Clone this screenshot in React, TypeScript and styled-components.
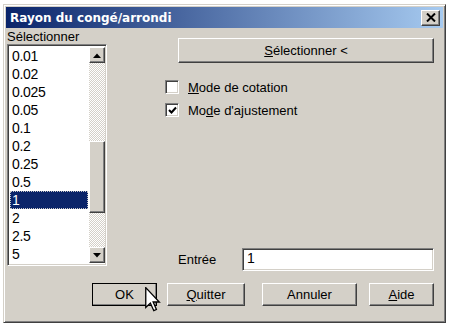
import React from 'react';
import styled, { createGlobalStyle, css } from 'styled-components';

const FACE = '#d4d0c8';
const SHADOW = '#808080';
const DARK = '#404040';

const GlobalStyle = createGlobalStyle`
  html, body {
    margin: 0;
    padding: 0;
    background: #fff;
  }
  body {
    font-family: 'Liberation Sans', Arial, sans-serif;
    font-size: 13px;
    color: #000;
  }
`;

const raised = css`
  border: 1px solid;
  border-color: #fff ${DARK} ${DARK} #fff;
  box-shadow: inset -1px -1px 0 ${SHADOW}, inset 1px 1px 0 ${FACE};
`;

const sunken = css`
  border: 1px solid;
  border-color: ${SHADOW} #fff #fff ${SHADOW};
  box-shadow: inset 1px 1px 0 ${DARK}, inset -1px -1px 0 ${FACE};
`;

const Screen = styled.div`
  padding: 4px 3px 0;
`;

const Window = styled.div`
  position: relative;
  box-sizing: border-box;
  width: 443px;
  height: 319px;
  padding: 2px;
  background: ${FACE};
  border: 1px solid;
  border-color: ${FACE} ${DARK} ${DARK} ${FACE};
  box-shadow: inset 1px 1px 0 #fff, inset -1px -1px 0 ${SHADOW};
`;

const TitleBar = styled.div`
  display: flex;
  align-items: center;
  justify-content: space-between;
  height: 21px;
  padding: 0 3px 0 4px;
  background: linear-gradient(to right, #0a246a, #a6caf0);
`;

const Title = styled.span`
  font-family: 'DejaVu Sans', Verdana, sans-serif;
  font-weight: bold;
  font-size: 12px;
  color: #fff;
`;

const CloseButton = styled.div`
  box-sizing: border-box;
  display: flex;
  align-items: center;
  justify-content: center;
  width: 19px;
  height: 16px;
  background: ${FACE};
  ${raised};
`;

const Body = styled.div`
  display: grid;
  grid-template-columns: 100px 1fr;
  grid-template-rows: 241px auto;
  column-gap: 58px;
  padding: 2px 9px 0 1px;
`;

const LeftColumn = styled.div`
  display: flex;
  flex-direction: column;
`;

const Label = styled.div`
  height: 14px;
  line-height: 14px;
`;

const ListBox = styled.div`
  box-sizing: border-box;
  display: flex;
  width: 100px;
  height: 222px;
  padding: 2px 1px 2px 2px;
  background: #fff;
  ${sunken};
`;

const Items = styled.div`
  flex: 1;
  padding-right: 1px;
`;

const Item = styled.div<{ $selected?: boolean }>`
  box-sizing: border-box;
  height: 18px;
  line-height: 18px;
  padding-left: 2px;
  font-size: 14px;
  letter-spacing: -0.3px;
  color: ${(p) => (p.$selected ? '#fff' : '#000')};
  background: ${(p) => (p.$selected ? '#0a246a' : 'transparent')};
  outline: ${(p) => (p.$selected ? '1px dotted #c8c8c8' : 'none')};
  outline-offset: -1px;
`;

const ScrollBar = styled.div`
  display: flex;
  flex-direction: column;
  width: 16px;
`;

const ArrowButton = styled.div`
  box-sizing: border-box;
  display: flex;
  align-items: center;
  justify-content: center;
  height: 16px;
  background: ${FACE};
  ${raised};
`;

const Track = styled.div<{ $size?: number }>`
  flex: ${(p) => (p.$size ? `0 0 ${p.$size}px` : '1')};
  background-color: #fff;
  background-image: repeating-conic-gradient(${FACE} 0 25%, #fff 0 50%);
  background-size: 2px 2px;
`;

const Thumb = styled.div`
  box-sizing: border-box;
  flex: 0 0 72px;
  background: ${FACE};
  ${raised};
`;

const RightColumn = styled.div`
  display: flex;
  flex-direction: column;
`;

const Button = styled.div<{ $width?: number; $default?: boolean; $gap?: number }>`
  box-sizing: border-box;
  display: flex;
  align-items: center;
  justify-content: center;
  width: ${(p) => (p.$width ? `${p.$width}px` : 'auto')};
  height: 25px;
  margin-left: ${(p) => p.$gap ?? 0}px;
  background: ${FACE};
  ${raised};
  ${(p) =>
    p.$default &&
    css`
      outline: 1px solid #000;
      outline-offset: -1px;
      border-color: #fff #000 #000 #fff;
    `}
`;

const WideButton = styled(Button)`
  margin: 8px 0 0 13px;
`;

const CheckRow = styled.div<{ $gap: number }>`
  display: flex;
  align-items: center;
  gap: 9px;
  height: 14px;
  margin-top: ${(p) => p.$gap}px;
`;

const CheckBox = styled.div`
  box-sizing: border-box;
  display: flex;
  align-items: center;
  justify-content: center;
  width: 14px;
  height: 14px;
  background: #fff;
  ${sunken};
`;

const Spacer = styled.div`
  flex: 1;
`;

const EntryRow = styled.div`
  display: flex;
  align-items: center;
  height: 23px;
  margin-left: 13px;
`;

const EntryLabel = styled.span`
  width: 64px;
`;

const Input = styled.div`
  box-sizing: border-box;
  flex: 1;
  height: 23px;
  padding-left: 4px;
  line-height: 19px;
  font-size: 14px;
  background: #fff;
  ${sunken};
`;

const ButtonRow = styled.div`
  grid-column: 1 / -1;
  display: flex;
  justify-content: flex-end;
  margin-top: 12px;

  ${Button} {
    height: 23px;
  }
`;

const Cursor = styled.svg`
  position: absolute;
  left: 141px;
  top: 282px;
`;

const values = ['0.01', '0.02', '0.025', '0.05', '0.1', '0.2', '0.25', '0.5', '1', '2', '2.5', '5'];

const Tri: React.FC<{ down?: boolean }> = ({ down }) => (
  <svg width="8" height="5" viewBox="0 0 8 5">
    <polygon points={down ? '0,0 8,0 4,4.5' : '4,0.5 8,5 0,5'} fill="#000" />
  </svg>
);

const App: React.FC = () => (
  <Screen>
    <GlobalStyle />
    <Window>
      <TitleBar>
        <Title>Rayon du congé/arrondi</Title>
        <CloseButton>
          <svg width="10" height="9" viewBox="0 0 10 9">
            <path d="M1 0.5 L9 8.5 M9 0.5 L1 8.5" stroke="#000" strokeWidth="2" />
          </svg>
        </CloseButton>
      </TitleBar>
      <Body>
        <LeftColumn>
          <Label>Sélectionner</Label>
          <ListBox>
            <Items>
              {values.map((v) => (
                <Item key={v} $selected={v === '1'}>
                  {v}
                </Item>
              ))}
            </Items>
            <ScrollBar>
              <ArrowButton>
                <Tri />
              </ArrowButton>
              <Track $size={78} />
              <Thumb />
              <Track />
              <ArrowButton>
                <Tri down />
              </ArrowButton>
            </ScrollBar>
          </ListBox>
        </LeftColumn>
        <RightColumn>
          <WideButton>
            <span>
              <u>S</u>électionner &lt;
            </span>
          </WideButton>
          <CheckRow $gap={17}>
            <CheckBox />
            <span>
              <u>M</u>ode de cotation
            </span>
          </CheckRow>
          <CheckRow $gap={9}>
            <CheckBox>
              <svg width="9" height="9" viewBox="0 0 9 9">
                <path d="M1 4 L3.5 6.5 L8 1.5" stroke="#000" strokeWidth="2" fill="none" />
              </svg>
            </CheckBox>
            <span>
              Mo<u>d</u>e d'ajustement
            </span>
          </CheckRow>
          <Spacer />
          <EntryRow>
            <EntryLabel>Entrée</EntryLabel>
            <Input>1</Input>
          </EntryRow>
        </RightColumn>
        <ButtonRow>
          <Button $width={65} $default>
            OK
          </Button>
          <Button $width={78} $gap={10}>
            <span>
              <u>Q</u>uitter
            </span>
          </Button>
          <Button $width={95} $gap={17}>
            Annuler
          </Button>
          <Button $width={65} $gap={12}>
            <span>
              <u>A</u>ide
            </span>
          </Button>
        </ButtonRow>
      </Body>
      <Cursor width="16" height="25" viewBox="0 0 12 19">
        <path
          d="M0.5 0.5 L0.5 15.5 L4 12.2 L6.6 18 L8.6 17.1 L6.1 11.4 L10.8 11.4 Z"
          fill="#fff"
          stroke="#000"
          strokeWidth="1"
          strokeLinejoin="miter"
        />
      </Cursor>
    </Window>
  </Screen>
);

export default App;
